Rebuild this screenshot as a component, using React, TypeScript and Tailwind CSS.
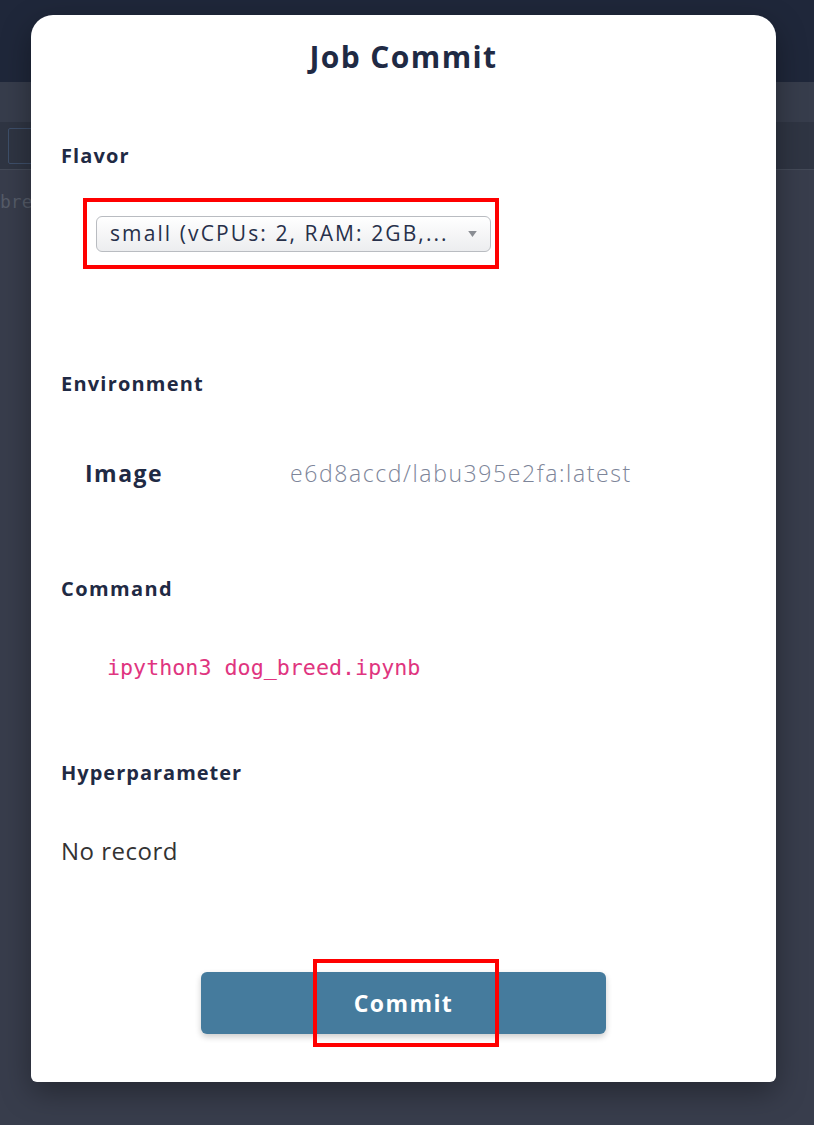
import React from "react";

export default function App() {
  return (
    <div className="relative w-[814px] h-[1125px] overflow-hidden bg-[#383e4d]" style={{ fontFamily: '"Open Sans", "Noto Sans", sans-serif' }}>
      {/* background page */}
      <div className="absolute inset-0 flex flex-col">
        <div className="h-[82px] bg-[#1f273a]" />
        <div className="h-[40px] bg-[#373d4c]" />
        <div className="h-[48px] bg-[#2f3543] border-b border-[#444a58] flex items-center px-[8px]">
          <div className="w-[40px] h-[36px] border border-[#3e4f6a] rounded-[2px] flex items-center justify-end pr-[6px] text-[#5c6474] text-[14px]">≡</div>
        </div>
        <div className="flex-1 bg-[#383d4c] pt-[18px] text-[#555b68] text-[18px]" style={{ fontFamily: '"DejaVu Sans Mono", monospace' }}>
          <span>bre</span>
        </div>
      </div>

      {/* modal */}
      <div className="absolute left-[31px] top-[15px] w-[745px] h-[1067px] bg-white rounded-t-[22px] rounded-b-[6px] shadow-[0_10px_30px_rgba(0,0,0,0.35)] flex flex-col">
        <h1 className="text-center text-[30px] font-bold text-[#1f2a44] pt-[22px] leading-[40px] tracking-[1.4px]">Job Commit</h1>

        <div className="pl-[30px] pt-[66px]">
          <div className="text-[20px] font-bold text-[#1f2a44] leading-[26px] tracking-[1.1px]">Flavor</div>
          <div className="mt-[29px] ml-[22px] w-[416px] h-[71px] border-[4px] border-[#ff0000] pt-[14px] pl-[9px]">
            <div className="w-[395px] h-[36px] rounded-[6px] border border-[#b9bcc1] bg-gradient-to-b from-white to-[#ecedef] flex items-center pl-[13px] pr-[13px] justify-between">
              <span className="text-[21px] text-[#27304a] whitespace-nowrap tracking-[2.1px]">small (vCPUs: 2, RAM: 2GB,...</span>
              <svg width="9" height="6" viewBox="0 0 10 7"><path d="M0 0 L10 0 L5 7 Z" fill="#8a8d93" /></svg>
            </div>
          </div>

          <div className="mt-[102px] text-[20px] font-bold text-[#1f2a44] leading-[26px] tracking-[1.2px]">Environment</div>
          <div className="mt-[60px] flex items-center leading-[32px]">
            <span className="ml-[24px] w-[205px] text-[23px] font-bold text-[#1f2a44] tracking-[1.5px]">Image</span>
            <span className="text-[23px] font-light text-[#7d8599] tracking-[1.6px]">e6d8accd/labu395e2fa:latest</span>
          </div>

          <div className="mt-[87px] text-[20px] font-bold text-[#1f2a44] leading-[26px] tracking-[1.4px]">Command</div>
          <div className="mt-[52px] ml-[46px] text-[21.7px] text-[#e0357f] leading-[28px]" style={{ fontFamily: '"DejaVu Sans Mono", "Liberation Mono", monospace' }}>ipython3 dog_breed.ipynb</div>

          <div className="mt-[78px] text-[20px] font-bold text-[#1f2a44] leading-[26px] tracking-[1px]">Hyperparameter</div>
          <div className="mt-[49px] text-[24px] text-[#333] leading-[32px] tracking-[0.5px]">No record</div>
        </div>

        <div className="mt-[105px] flex justify-center">
          <div className="relative">
            <button className="w-[405px] h-[62px] bg-[#457b9d] rounded-[6px] text-white text-[23px] font-bold tracking-[1.4px] shadow-[0_3px_6px_rgba(0,0,0,0.2)]">Commit</button>
            <div className="absolute left-[112px] top-[-13px] w-[186px] h-[88px] border-[4px] border-[#ff0000]" />
          </div>
        </div>
      </div>
    </div>
  );
}
